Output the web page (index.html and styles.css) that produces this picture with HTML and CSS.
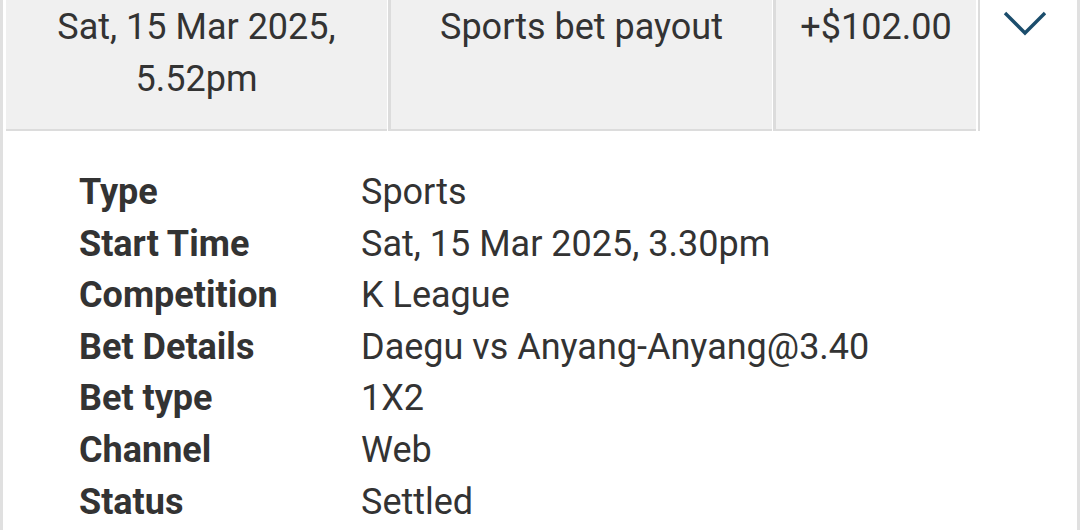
FILE: index.html
```html
<!DOCTYPE html>
<html lang="en">
<head>
  <meta charset="UTF-8" />
  <meta name="viewport" content="width=device-width, initial-scale=1.0"/>
  <title>Transaction details</title>
  <link rel="stylesheet" href="styles.css">
</head>
<body>

  <div class="transaction">
    <div class="summary">
      <div class="cell cell-date">Sat, 15 Mar 2025,<br>5.52pm</div>
      <div class="cell cell-desc">Sports bet payout</div>
      <div class="cell cell-amount">+$102.00</div>
      <div class="cell-toggle">
        <svg width="46" height="28" viewBox="0 0 46 28">
          <polyline points="3,3 23,23 43,3" fill="none" stroke="#1b4d6c" stroke-width="3.4" />
        </svg>
      </div>
    </div>

    <dl class="details">
      <dt>Type</dt><dd>Sports</dd>
      <dt>Start Time</dt><dd>Sat, 15 Mar 2025, 3.30pm</dd>
      <dt>Competition</dt><dd>K League</dd>
      <dt>Bet Details</dt><dd>Daegu vs Anyang-Anyang@3.40</dd>
      <dt>Bet type</dt><dd>1X2</dd>
      <dt>Channel</dt><dd>Web</dd>
      <dt>Status</dt><dd>Settled</dd>
    </dl>
  </div>

</body>
</html>
```

FILE: styles.css
```css
* {
  margin: 0;
  padding: 0;
  box-sizing: border-box;
}

body, html {
  height: 100%;
  font-family: Roboto, "Liberation Sans", sans-serif;
  color: #333;
  background: white;
}

.transaction {
  height: 100%;
  border-left: 3px solid #e0e0e0;
  border-right: 3px solid #e0e0e0;
}

.summary {
  display: flex;
  height: 131px;
}

.cell {
  background: #f0f0f0;
  border-bottom: 2px solid #dcdcdc;
  text-align: center;
  font-size: 36px;
  line-height: 52px;
  padding-top: 1px;
}

.cell-date {
  margin-left: 3px;
  width: 381px;
}

.cell-desc {
  margin-left: 1px;
  border-left: 3px solid #dcdcdc;
  width: 384px;
}

.cell-amount {
  margin-left: 1px;
  border-left: 3px solid #dcdcdc;
  width: 203px;
}

.cell-toggle {
  flex: 1;
  margin-left: 2px;
  border-left: 2px solid #dcdcdc;
  display: flex;
  justify-content: center;
  padding-top: 9.5px;
  padding-right: 7px;
}

.details {
  display: grid;
  grid-template-columns: 282px 1fr;
  padding: 36px 0 0 76px;
  font-size: 36px;
  line-height: 51.6px;
}

.details dt {
  font-weight: bold;
}
```
